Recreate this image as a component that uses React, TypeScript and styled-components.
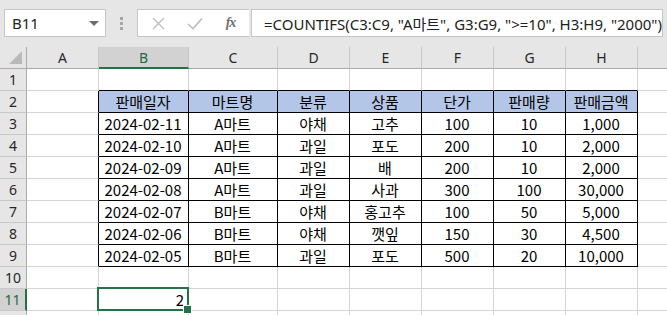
import React from "react";
import styled, { createGlobalStyle, css } from "styled-components";

const Global = createGlobalStyle`
  html, body { margin: 0; padding: 0; background: #ffffff; }
  body { width: 667px; height: 315px; overflow: hidden; }
  * { box-sizing: border-box; }
`;

const UI_FONT = `"Noto Sans", "Noto Sans CJK KR", sans-serif`;
const CELL_FONT = `"Noto Sans CJK KR", "Noto Sans", sans-serif`;

const Page = styled.div`
  width: 667px;
  height: 315px;
  overflow: hidden;
  background: #ffffff;
  display: flex;
  flex-direction: column;
`;

const TopBar = styled.div`
  height: 47px;
  flex: none;
  background: #e6e6e6;
  display: flex;
  align-items: flex-start;
  padding: 9px 4px 0 4px;
`;

const NameBox = styled.div`
  width: 102px;
  height: 28px;
  background: #ffffff;
  border: 1px solid #c6c6c6;
  display: flex;
  align-items: center;
  justify-content: space-between;
  padding: 0 6px 0 7px;
  font-family: ${UI_FONT};
  font-size: 15px;
  color: #222;
`;

const Caret = styled.span`
  width: 0;
  height: 0;
  border-left: 5px solid transparent;
  border-right: 5px solid transparent;
  border-top: 5px solid #6d6d6d;
  margin-top: 1px;
`;

const Grip = styled.div`
  width: 31px;
  height: 28px;
  display: flex;
  flex-direction: column;
  align-items: center;
  justify-content: center;
  gap: 2px;
`;

const GripDot = styled.span`
  width: 3px;
  height: 3px;
  background: #a6a6a6;
`;

const IconBox = styled.div`
  width: 112px;
  height: 28px;
  background: #ffffff;
  border: 1px solid #c6c6c6;
  border-right: none;
  display: flex;
  align-items: center;
  padding-left: 12px;
  gap: 19px;
`;

const IconSlot = styled.span`
  width: 17px;
  height: 17px;
  display: flex;
  align-items: center;
  justify-content: center;
`;

const Fx = styled.span`
  font-family: "Liberation Serif", serif;
  font-style: italic;
  font-weight: bold;
  font-size: 14px;
  color: #707070;
  letter-spacing: -1px;
`;

const FormulaInput = styled.div`
  flex: 1;
  margin-left: 2px;
  height: 28px;
  background: #ffffff;
  border: 1px solid #c6c6c6;
  display: flex;
  align-items: center;
  padding-left: 12px;
  font-family: ${UI_FONT};
  font-size: 15px;
  color: #222;
  white-space: nowrap;
  overflow: hidden;
`;

const COLS = "27px 72px 90px 89px 72px 72px 72px 72px 72px 1fr";

const Sheet = styled.div`
  display: grid;
  grid-template-columns: ${COLS};
  grid-auto-rows: 22px;
`;

const ColHead = styled.div<{ $active?: boolean }>`
  background: ${(p) => (p.$active ? "#d2d2d2" : "#e6e6e6")};
  border-right: 1px solid #c8c8c8;
  border-bottom: ${(p) => (p.$active ? "2px solid #217346" : "1px solid #ababab")};
  display: flex;
  align-items: center;
  justify-content: center;
  font-family: ${UI_FONT};
  font-size: 14px;
  color: ${(p) => (p.$active ? "#1e6b41" : "#262626")};
`;

const Corner = styled.div`
  background: #e6e6e6;
  border-right: 1px solid #ababab;
  border-bottom: 1px solid #ababab;
  display: flex;
  align-items: flex-end;
  justify-content: flex-end;
  padding: 0 4px 4px 0;
`;

const CornerTri = styled.span`
  width: 0;
  height: 0;
  border-left: 13px solid transparent;
  border-bottom: 13px solid #b9b9b9;
`;

const RowHead = styled.div<{ $active?: boolean }>`
  background: ${(p) => (p.$active ? "#d2d2d2" : "#e6e6e6")};
  border-right: ${(p) => (p.$active ? "2px solid #217346" : "1px solid #ababab")};
  border-bottom: 1px solid #c8c8c8;
  display: flex;
  align-items: center;
  justify-content: center;
  font-family: ${UI_FONT};
  font-size: 14px;
  color: ${(p) => (p.$active ? "#1e6b41" : "#262626")};
`;

const Cell = styled.div<{
  $rightDark?: boolean;
  $bottomDark?: boolean;
  $head?: boolean;
  $align?: "center" | "right";
  $selected?: boolean;
}>`
  position: relative;
  background: ${(p) => (p.$head ? "#b4c6e7" : "#ffffff")};
  border-right: 1px solid ${(p) => (p.$rightDark ? "#000000" : "#d4d4d4")};
  border-bottom: 1px solid ${(p) => (p.$bottomDark ? "#000000" : "#d4d4d4")};
  display: flex;
  align-items: center;
  justify-content: ${(p) => (p.$align === "right" ? "flex-end" : "center")};
  padding: 0 4px 0 3px;
  font-family: ${CELL_FONT};
  font-size: 15px;
  color: #000000;
  white-space: nowrap;
  ${(p) =>
    p.$selected &&
    css`
      &::after {
        content: "";
        position: absolute;
        left: -2px;
        top: -2px;
        right: -1px;
        bottom: -1px;
        border: 2px solid #217346;
        pointer-events: none;
      }
      &::before {
        content: "";
        position: absolute;
        right: -4px;
        bottom: -4px;
        width: 7px;
        height: 7px;
        background: #217346;
        border: 1px solid #ffffff;
        z-index: 1;
      }
    `}
`;

const Tail = styled.div`
  border-bottom: 1px solid #d4d4d4;
  background: #ffffff;
`;

const TailHead = styled.div`
  background: #e6e6e6;
  border-bottom: 1px solid #ababab;
`;

const colLetters = ["A", "B", "C", "D", "E", "F", "G", "H"];

const header = ["판매일자", "마트명", "분류", "상품", "단가", "판매량", "판매금액"];
const data: string[][] = [
  ["2024-02-11", "A마트", "야채", "고추", "100", "10", "1,000"],
  ["2024-02-10", "A마트", "과일", "포도", "200", "10", "2,000"],
  ["2024-02-09", "A마트", "과일", "배", "200", "10", "2,000"],
  ["2024-02-08", "A마트", "과일", "사과", "300", "100", "30,000"],
  ["2024-02-07", "B마트", "야채", "홍고추", "100", "50", "5,000"],
  ["2024-02-06", "B마트", "야채", "깻잎", "150", "30", "4,500"],
  ["2024-02-05", "B마트", "과일", "포도", "500", "20", "10,000"],
];

function CancelIcon() {
  return (
    <svg width="13" height="13" viewBox="0 0 13 13">
      <path d="M1 1 L12 12 M12 1 L1 12" stroke="#bdbdbd" strokeWidth="1.4" fill="none" />
    </svg>
  );
}

function CheckIcon() {
  return (
    <svg width="16" height="13" viewBox="0 0 16 13">
      <path d="M1 7 L6 11.5 L15 1.5" stroke="#bdbdbd" strokeWidth="1.6" fill="none" />
    </svg>
  );
}

function renderRow(rowNum: number) {
  const cells: React.ReactNode[] = [];
  const inTable = rowNum >= 2 && rowNum <= 9;
  const activeRow = rowNum === 11;
  cells.push(
    <RowHead key="h" $active={activeRow}>
      {rowNum <= 11 ? rowNum : ""}
    </RowHead>
  );
  for (let c = 0; c < 8; c++) {
    const key = `c${c}`;
    if (c === 0) {
      cells.push(<Cell key={key} $rightDark={inTable} />);
      continue;
    }
    const idx = c - 1;
    if (inTable) {
      const isHead = rowNum === 2;
      const text = isHead ? header[idx] : data[rowNum - 3][idx];
      cells.push(
        <Cell key={key} $rightDark $bottomDark $head={isHead}>
          {text}
        </Cell>
      );
    } else if (rowNum === 1) {
      cells.push(<Cell key={key} $bottomDark />);
    } else if (rowNum === 11 && c === 1) {
      cells.push(
        <Cell key={key} $align="right" $selected>
          2
        </Cell>
      );
    } else {
      cells.push(<Cell key={key} />);
    }
  }
  cells.push(<Tail key="t" />);
  return cells;
}

export default function App() {
  const rows = Array.from({ length: 12 }, (_, i) => i + 1);
  return (
    <Page>
      <Global />
      <TopBar>
        <NameBox>
          <span>B11</span>
          <Caret />
        </NameBox>
        <Grip>
          <GripDot />
          <GripDot />
          <GripDot />
        </Grip>
        <IconBox>
          <IconSlot>
            <CancelIcon />
          </IconSlot>
          <IconSlot>
            <CheckIcon />
          </IconSlot>
          <IconSlot>
            <Fx>fx</Fx>
          </IconSlot>
        </IconBox>
        <FormulaInput>=COUNTIFS(C3:C9, "A마트", G3:G9, "&gt;=10", H3:H9, "2000")</FormulaInput>
      </TopBar>
      <Sheet>
        <Corner>
          <CornerTri />
        </Corner>
        {colLetters.map((l) => (
          <ColHead key={l} $active={l === "B"}>
            {l}
          </ColHead>
        ))}
        <TailHead />
        {rows.map((r) => (
          <React.Fragment key={r}>{renderRow(r)}</React.Fragment>
        ))}
      </Sheet>
    </Page>
  );
}
